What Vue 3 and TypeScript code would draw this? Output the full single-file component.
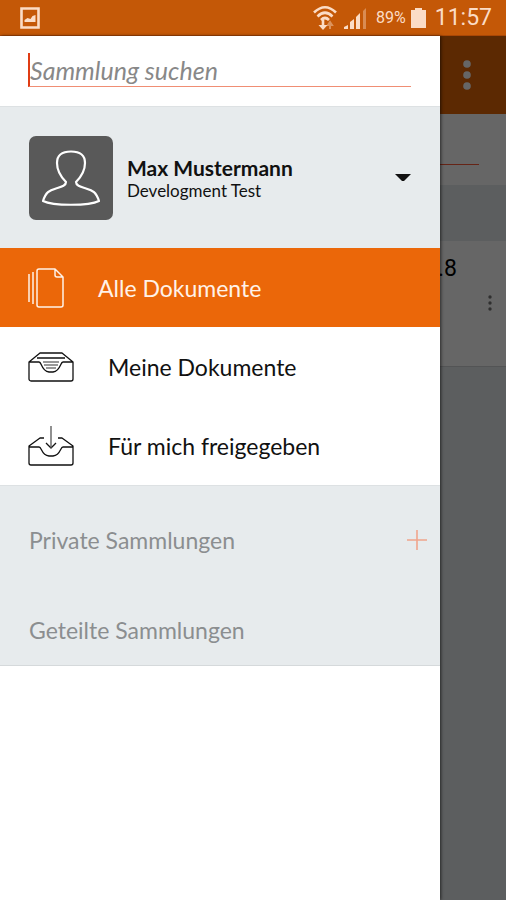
<script setup lang="ts">
import { ref } from 'vue'

interface Profile {
  name: string
  organisation: string
}

interface Entry {
  id: string
  label: string
}

const profile: Profile = { name: 'Max Mustermann', organisation: 'Develogment Test' }
const entries: Entry[] = [
  { id: 'all', label: 'Alle Dokumente' },
  { id: 'mine', label: 'Meine Dokumente' },
  { id: 'shared', label: 'Für mich freigegeben' },
]
const active = ref('all')
const query = ref('')
</script>

<template>
  <div class="screen">
    <header class="status">
      <svg class="status-picture" width="20" height="22" viewBox="0 0 20 22" aria-hidden="true">
        <path d="M1.500 1.500h17v19h-17z" fill="none" stroke="currentColor" stroke-width="2.600" />
        <path d="M4.500 15v-2l3-2 3 1 2-3 3-1v7z" fill="currentColor" />
      </svg>
      <div class="status-right">
        <svg class="wifi" width="24" height="26" viewBox="0 0 24 26" fill="none" stroke="currentColor" aria-hidden="true">
          <path d="M1 7.500Q12-3 23 7.500M4.500 11.500Q12 4 19.500 11.500M8 15Q12 11 16 15" stroke-width="2.600" />
          <path d="M10 15v6" stroke-width="2.600" />
          <path d="M5.500 20h9l-4.500 5z" fill="currentColor" stroke="none" />
          <path d="M17 24v-5M15 20l2-3 2 3z" opacity=".45" stroke-width="2" />
        </svg>
        <svg class="signal" width="23" height="22" viewBox="0 0 23 22" fill="currentColor" aria-hidden="true">
          <path d="M0 22v-2l4-2v4zM6 22v-7l4-3v10zM12 22v-12l4-4v16z" />
          <path d="M19 22V4l3-3v21z" opacity=".4" />
        </svg>
        <span class="percent">89%</span>
        <svg class="battery" width="15" height="20" viewBox="0 0 15 20" fill="currentColor" aria-hidden="true">
          <path d="M4 0h7v2h4v18H0V2h4z" />
        </svg>
        <time class="clock">11:57</time>
      </div>
    </header>

    <div class="stage">
      <main class="page">
        <div class="appbar">
          <button class="more" type="button" aria-label="Menü">
            <svg width="8" height="30" viewBox="0 0 8 30" fill="currentColor">
              <circle cx="4" cy="4" r="3.800" /><circle cx="4" cy="15" r="3.800" /><circle cx="4" cy="26" r="3.800" />
            </svg>
          </button>
        </div>
        <div class="page-search"><div class="page-line"></div></div>
        <div class="page-band"></div>
        <article class="card">
          <span class="card-date">.8</span>
          <button class="card-more" type="button" aria-label="Optionen">
            <svg width="4" height="16" viewBox="0 0 4 16" fill="currentColor">
              <circle cx="2" cy="2" r="1.700" /><circle cx="2" cy="8" r="1.700" /><circle cx="2" cy="14" r="1.700" />
            </svg>
          </button>
        </article>
      </main>
      <div class="scrim"></div>

      <aside class="drawer">
        <div class="search">
          <input v-model="query" class="search-input" type="text" placeholder="Sammlung suchen" aria-label="Sammlung suchen">
        </div>

        <section class="profile">
          <svg class="avatar" width="84" height="84" viewBox="0 0 84 84" aria-hidden="true">
            <rect width="84" height="84" rx="7" fill="#595959" />
            <path d="M37 46C31 40 28 34 28 27C28 19 33 15.500 42 15.500S56 19 56 27C56 34 53 40 47 46C47 50 52 51 57 52.500C64 54.500 67 56 70 65C60 70 24 70 14 65C17 56 20 54.500 27 52.500C32 51 37 50 37 46Z" fill="none" stroke="#fff" stroke-width="2.200" stroke-linejoin="round" />
          </svg>
          <div class="person">
            <strong class="name">{{ profile.name }}</strong>
            <span class="organisation">{{ profile.organisation }}</span>
          </div>
          <button class="switch" type="button" aria-label="Konto wechseln">
            <svg width="16" height="9" viewBox="0 0 16 9"><path d="M0 1h16L9 8H7z" fill="#111" /></svg>
          </button>
        </section>

        <nav class="nav">
          <a
            v-for="entry in entries"
            :key="entry.id"
            href="#"
            class="row"
            :class="{ active: entry.id === active }"
            @click.prevent="active = entry.id"
          >
            <svg v-if="entry.id === 'all'" class="icon" width="36" height="40" viewBox="0 0 36 40" fill="none" stroke="currentColor" stroke-width="1.500" stroke-linejoin="round">
              <path d="M1 6v28M5 4v32M11 1h16l8 8v28a2 2 0 0 1-2 2H11a2 2 0 0 1-2-2V3a2 2 0 0 1 2-2zM27 1v6a2 2 0 0 0 2 2h6" />
            </svg>
            <svg v-else-if="entry.id === 'mine'" class="icon" width="46" height="40" viewBox="0 0 46 40" fill="none" stroke="currentColor" stroke-width="1.300" stroke-linejoin="round">
              <path d="M1 15L12 6h22l11 9v17a2 2 0 0 1-2 2H3a2 2 0 0 1-2-2V15h10c3 0 2 9 10 10h4c8-1 7-10 10-10h10M9 11h28" />
              <path d="M15 15h16M16 18h14M18 21h10" stroke="#777" />
            </svg>
            <svg v-else class="icon" width="46" height="40" viewBox="0 0 46 40" fill="none" stroke="currentColor" stroke-width="1.300" stroke-linejoin="round">
              <path d="M16 12h-4L1 20v17a2 2 0 0 0 2 2h40a2 2 0 0 0 2-2V20L34 12h-4M1 21h10c3 0 2 8 10 9h4c8-1 7-9 10-9h10M18 17l5 5 5-5" />
              <path d="M23 0v22" stroke="#555" />
            </svg>
            <span>{{ entry.label }}</span>
          </a>
        </nav>

        <section class="collections">
          <div class="collection">
            <span>Private Sammlungen</span>
            <button class="add" type="button" aria-label="Sammlung hinzufügen">
              <svg width="20" height="20" viewBox="0 0 20 20" fill="none" stroke="#f0a58c" stroke-width="1.600"><path d="M0 10h20M10 0v20" /></svg>
            </button>
          </div>
          <div class="collection">
            <span>Geteilte Sammlungen</span>
          </div>
        </section>
      </aside>
    </div>
  </div>
</template>

<style>
body {
  margin: 0;
}
</style>

<style scoped>
.screen {
  display: flex;
  flex-direction: column;
  min-height: 100vh;
  overflow: hidden;
  font-family: Lato, "Liberation Sans", sans-serif;
  color: #111;
}
.screen * {
  box-sizing: border-box;
}
svg {
  display: block;
  flex: none;
}
button {
  padding: 0;
  border: 0;
  background: none;
  color: inherit;
}
.status {
  display: flex;
  align-items: center;
  justify-content: space-between;
  height: 36px;
  padding: 0 14px 0 20px;
  border-bottom: 1px solid #a94706;
  background: #c45807;
  color: #fbdcc6;
  font-family: Roboto, sans-serif;
}
.status-right {
  display: flex;
  align-items: center;
}
.signal {
  margin-left: 7px;
}
.percent {
  margin-left: 9px;
  font-size: 16px;
}
.battery {
  margin-left: 5px;
}
.clock {
  margin-left: 9px;
  font-size: 23px;
}
.stage {
  position: relative;
  display: flex;
  flex: 1;
}
.page {
  flex: 1;
  background: #e7ebed;
}
.appbar {
  display: flex;
  align-items: center;
  justify-content: flex-end;
  height: 78px;
  padding-right: 35px;
  background: #e56605;
  color: #fff;
}
.page-search {
  height: 71px;
  padding: 50px 27px 0 29px;
  background: #fff;
}
.page-line {
  border-top: 1px solid #ff5a38;
}
.page-band {
  height: 56px;
}
.card {
  display: flex;
  flex-direction: column;
  align-items: flex-end;
  gap: 12px;
  height: 126px;
  padding: 14px 14px 0;
  border-bottom: 1px solid #d0d3d5;
  background: #fff;
}
.card-date {
  padding-right: 35px;
  font-family: Roboto, sans-serif;
  font-size: 23px;
  line-height: 28px;
  color: #000;
}
.card-more {
  color: #777;
}
.scrim {
  position: absolute;
  inset: 0;
  background: rgba(0, 0, 0, 0.6);
}
.drawer {
  position: absolute;
  inset: 0 66px 0 0;
  background: #fff;
  box-shadow: 1px 0 3px rgba(0, 0, 0, 0.6);
}
.search {
  padding: 17px 29px 19px 28px;
  border-bottom: 1px solid #dde1e3;
}
.search-input {
  display: block;
  width: 100%;
  height: 34px;
  padding: 0;
  border: 0;
  border-left: 2px solid #e03c14;
  border-bottom: 1px solid #f08e74;
  border-radius: 0;
  outline: 0;
  background: none;
  font: italic 25px/32px Lato, sans-serif;
}
.search-input::placeholder {
  color: #888;
  opacity: 1;
}
.profile {
  display: flex;
  align-items: center;
  height: 141px;
  padding: 0 29px;
  background: #e7ebed;
}
.person {
  display: flex;
  flex: 1;
  flex-direction: column;
  padding-left: 14px;
}
.name {
  font-size: 21px;
  line-height: 26px;
}
.organisation {
  font-size: 17px;
  line-height: 20px;
}
.row {
  display: flex;
  align-items: center;
  gap: 34px;
  height: 79px;
  padding: 0 28px;
  color: #111;
  font-size: 23px;
  line-height: 28px;
  text-decoration: none;
}
.active {
  background: #eb6709;
  color: #fff2e8;
}
.collections {
  display: flex;
  flex-direction: column;
  gap: 20px;
  padding: 19px 13px 0 29px;
  border-top: 1px solid #dde1e3;
  border-bottom: 1px solid #d5d9db;
  background: #e7ebed;
  color: #8b8e90;
  font-size: 23px;
  line-height: 28px;
}
.collection {
  display: flex;
  align-items: center;
  justify-content: space-between;
  height: 70px;
}
</style>
